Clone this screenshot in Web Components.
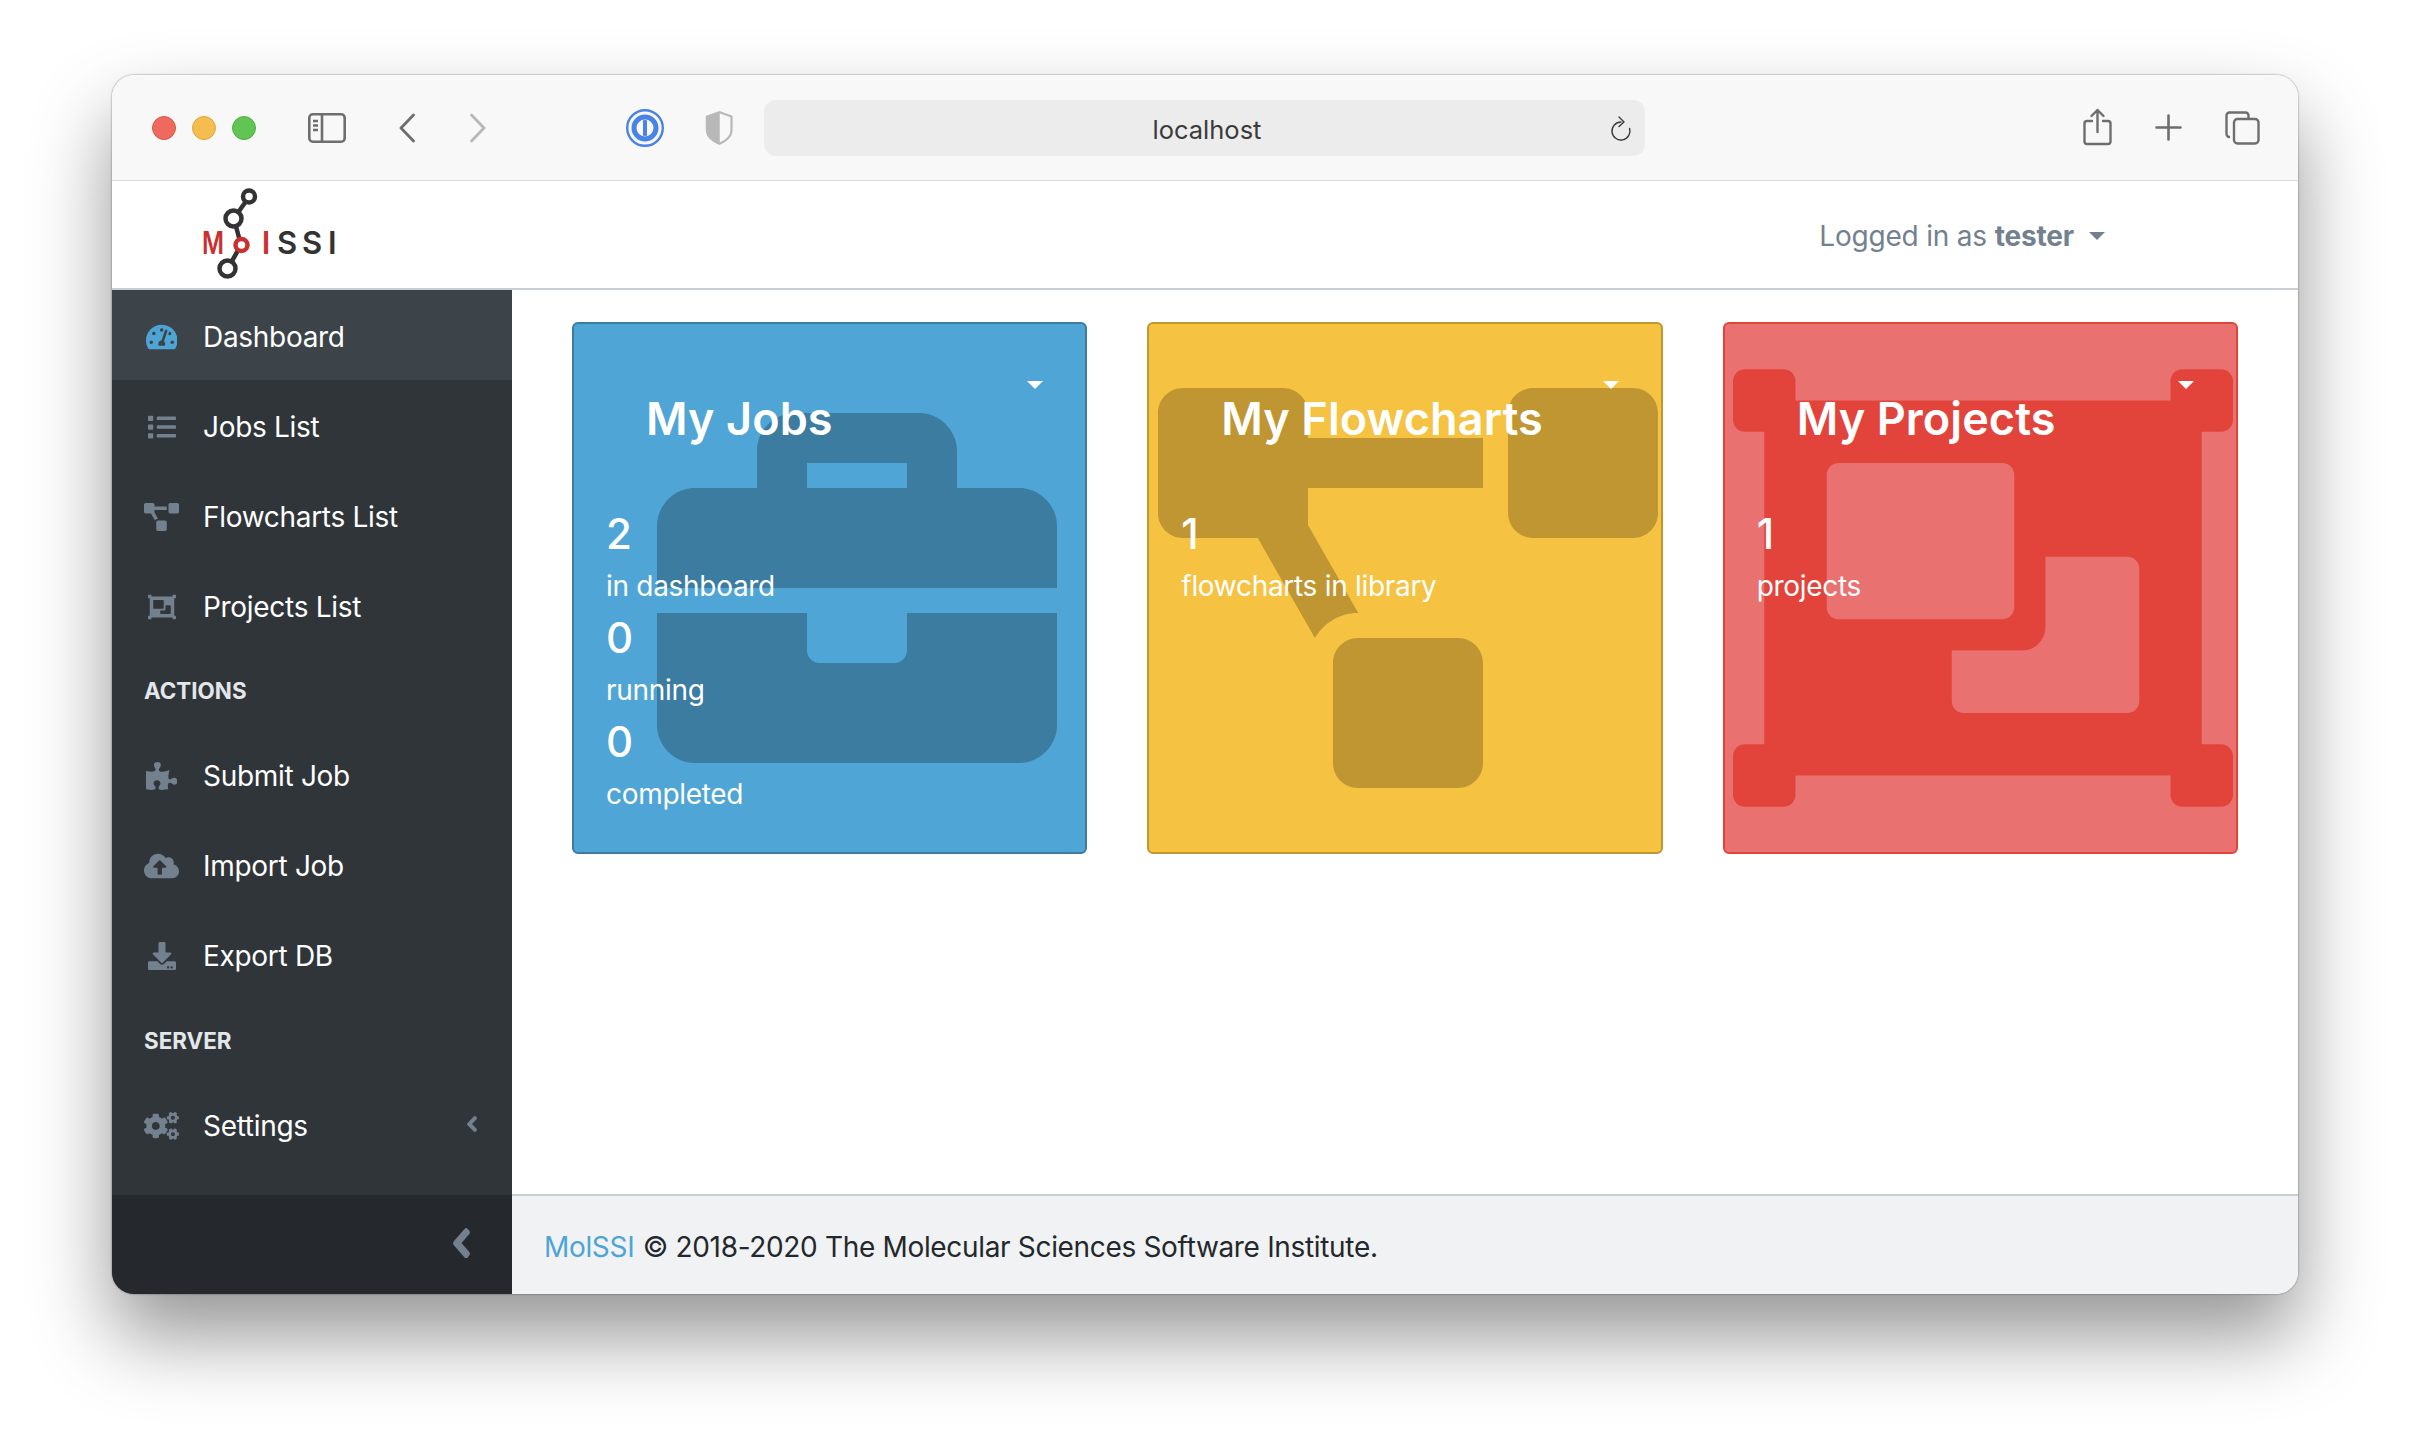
<!DOCTYPE html>
<html lang="en">
<head>
<meta charset="utf-8">
<title>MolSSI Dashboard</title>
<style>
    html, body { margin: 0; padding: 0; background: #fff; }
    body { font-family: Inter, "Liberation Sans", sans-serif; }
</style>
</head>
<body>
<app-window>
    <browser-toolbar slot="toolbar" url="localhost"></browser-toolbar>
    <app-navbar slot="navbar" user="tester"></app-navbar>
    <side-nav slot="sidebar">
        <nav-item icon="gauge" label="Dashboard" active></nav-item>
        <nav-item icon="list" label="Jobs List"></nav-item>
        <nav-item icon="diagram" label="Flowcharts List"></nav-item>
        <nav-item icon="group" label="Projects List"></nav-item>
        <nav-title>Actions</nav-title>
        <nav-item icon="puzzle" label="Submit Job"></nav-item>
        <nav-item icon="cloud" label="Import Job"></nav-item>
        <nav-item icon="download" label="Export DB"></nav-item>
        <nav-title>Server</nav-title>
        <nav-item icon="cogs" label="Settings" expandable></nav-item>
    </side-nav>
    <card-grid>
        <stat-card tone="blue" icon="briefcase" heading="My Jobs">
            <stat-line value="2" label="in dashboard"></stat-line>
            <stat-line value="0" label="running"></stat-line>
            <stat-line value="0" label="completed"></stat-line>
        </stat-card>
        <stat-card tone="yellow" icon="diagram" heading="My Flowcharts">
            <stat-line value="1" label="flowcharts in library"></stat-line>
        </stat-card>
        <stat-card tone="red" icon="group" heading="My Projects">
            <stat-line value="1" label="projects"></stat-line>
        </stat-card>
    </card-grid>
    <app-footer slot="footer"></app-footer>
</app-window>

<script>
const ICONS = {
    gauge: ['0 0 576 512', 'M288 32C128.94 32 0 160.94 0 320c0 52.8 14.25 102.26 39.06 144.8 5.61 9.62 16.3 15.2 27.44 15.2h443c11.14 0 21.83-5.58 27.44-15.2C561.75 422.26 576 372.8 576 320c0-159.06-128.94-288-288-288zm0 64c14.71 0 26.58 10.13 30.32 23.65-1.11 2.26-2.64 4.23-3.45 6.67l-9.22 27.67c-5.13 3.49-10.97 6.01-17.64 6.01-17.67 0-32-14.33-32-32S270.33 96 288 96zM96 384c-17.67 0-32-14.33-32-32s14.33-32 32-32 32 14.33 32 32-14.33 32-32 32zm48-160c-17.67 0-32-14.33-32-32s14.33-32 32-32 32 14.33 32 32-14.33 32-32 32zm246.77-72.41l-61.33 184C343.13 347.33 352 364.54 352 384c0 11.72-3.38 22.55-8.88 32H232.88c-5.5-9.45-8.88-20.28-8.88-32 0-33.94 26.5-61.43 59.9-63.59l61.34-184.01c4.17-12.56 17.73-19.45 30.36-15.17 12.57 4.19 19.35 17.77 15.17 30.36zm14.66 57.2l15.52-46.55c3.47-1.29 7.13-2.23 11.05-2.23 17.67 0 32 14.33 32 32s-14.33 32-32 32c-11.38-.01-20.89-6.27-26.57-15.22zM480 384c-17.67 0-32-14.33-32-32s14.33-32 32-32 32 14.33 32 32-14.33 32-32 32z'],
    list: ['0 0 512 512', 'M80 368H16a16 16 0 0 0-16 16v64a16 16 0 0 0 16 16h64a16 16 0 0 0 16-16v-64a16 16 0 0 0-16-16zm0-320H16A16 16 0 0 0 0 64v64a16 16 0 0 0 16 16h64a16 16 0 0 0 16-16V64a16 16 0 0 0-16-16zm0 160H16a16 16 0 0 0-16 16v64a16 16 0 0 0 16 16h64a16 16 0 0 0 16-16v-64a16 16 0 0 0-16-16zm416 176H176a16 16 0 0 0-16 16v32a16 16 0 0 0 16 16h320a16 16 0 0 0 16-16v-32a16 16 0 0 0-16-16zm0-320H176a16 16 0 0 0-16 16v32a16 16 0 0 0 16 16h320a16 16 0 0 0 16-16V80a16 16 0 0 0-16-16zm0 160H176a16 16 0 0 0-16 16v32a16 16 0 0 0 16 16h320a16 16 0 0 0 16-16v-32a16 16 0 0 0-16-16z'],
    diagram: ['0 0 640 512', 'M384 320H256c-17.67 0-32 14.33-32 32v128c0 17.67 14.33 32 32 32h128c17.67 0 32-14.33 32-32V352c0-17.67-14.33-32-32-32zM192 32c0-17.67-14.33-32-32-32H32C14.33 0 0 14.33 0 32v128c0 17.67 14.33 32 32 32h95.72l73.16 128.04C211.98 300.98 232.4 288 256 288h.28L192 175.51V128h224V64H192V32zM608 0H480c-17.67 0-32 14.33-32 32v128c0 17.67 14.33 32 32 32h128c17.67 0 32-14.33 32-32V32c0-17.67-14.33-32-32-32z'],
    group: ['0 0 512 512', 'M480 128V96h20c6.627 0 12-5.373 12-12V44c0-6.627-5.373-12-12-12h-40c-6.627 0-12 5.373-12 12v20H64V44c0-6.627-5.373-12-12-12H12C5.373 32 0 37.373 0 44v40c0 6.627 5.373 12 12 12h20v320H12c-6.627 0-12 5.373-12 12v40c0 6.627 5.373 12 12 12h40c6.627 0 12-5.373 12-12v-20h384v20c0 6.627 5.373 12 12 12h40c6.627 0 12-5.373 12-12v-40c0-6.627-5.373-12-12-12h-20V128zM96 276V140c0-6.627 5.373-12 12-12h168c6.627 0 12 5.373 12 12v136c0 6.627-5.373 12-12 12H108c-6.627 0-12-5.373-12-12zm320 96c0 6.627-5.373 12-12 12H236c-6.627 0-12-5.373-12-12v-52h72c13.255 0 24-10.745 24-24v-72h84c6.627 0 12 5.373 12 12v136z'],
    puzzle: ['0 0 576 512', 'M519.442 288.651c-41.519 0-59.5 31.593-82.058 31.593C377.409 320.244 432 144 432 144s-196.288 80-196.288-3.297c0-35.827 36.288-46.25 36.288-85.985C272 19.216 243.885 0 210.539 0c-34.654 0-66.366 18.891-66.366 56.346 0 41.364 31.711 59.277 31.711 81.75C175.885 207.719 0 166.758 0 166.758v333.237s178.635 41.047 178.635-28.662c0-22.473-40-40.107-40-81.471 0-37.456 29.25-56.346 63.577-56.346 33.673 0 61.788 19.216 61.788 54.717 0 39.735-36.288 50.158-36.288 85.985 0 60.803 129.675 25.73 181.23 25.73 0 0-34.725-120.101 25.827-120.101 35.962 0 46.423 36.152 86.308 36.152C556.712 416 576 387.99 576 354.443c0-34.199-18.962-65.792-56.558-65.792z'],
    cloud: ['0 0 640 512', 'M537.6 226.6c4.1-10.7 6.4-22.4 6.4-34.6 0-53-43-96-96-96-19.7 0-38.1 6-53.3 16.2C367 64.2 315.3 32 256 32c-88.4 0-160 71.6-160 160 0 2.7.1 5.4.2 8.1C40.2 219.8 0 273.2 0 336c0 79.5 64.5 144 144 144h368c70.7 0 128-57.3 128-128 0-61.9-44-113.6-102.4-125.4zM393.4 288H328v112c0 8.8-7.2 16-16 16h-48c-8.8 0-16-7.2-16-16V288h-65.4c-14.3 0-21.4-17.2-11.3-27.3l105.4-105.4c6.2-6.2 16.4-6.2 22.6 0l105.4 105.4c10.1 10.1 2.9 27.3-11.3 27.3z'],
    download: ['0 0 512 512', 'M216 0h80c13.3 0 24 10.7 24 24v168h87.7c17.8 0 26.7 21.5 14.1 34.1L269.7 378.3c-7.5 7.5-19.8 7.5-27.3 0L90.1 226.1c-12.6-12.6-3.7-34.1 14.1-34.1H192V24c0-13.3 10.7-24 24-24zm296 376v112c0 13.3-10.7 24-24 24H24c-13.3 0-24-10.7-24-24V376c0-13.3 10.7-24 24-24h146.7l49 49c20.1 20.1 52.5 20.1 72.6 0l49-49H488c13.3 0 24 10.7 24 24zm-124 88c0-11-9-20-20-20s-20 9-20 20 9 20 20 20 20-9 20-20zm64 0c0-11-9-20-20-20s-20 9-20 20 9 20 20 20 20-9 20-20z'],
    cogs: ['0 0 640 512', 'M512.1 191l-8.2 14.3c-3 5.3-9.4 7.5-15.1 5.4-11.8-4.4-22.6-10.7-32.1-18.6-4.6-3.8-5.8-10.5-2.8-15.7l8.2-14.3c-6.9-8-12.3-17.3-15.9-27.4h-16.5c-6 0-11.2-4.3-12.2-10.3-2-12-2.1-24.6 0-37.1 1-6 6.2-10.4 12.2-10.4h16.5c3.6-10.1 9-19.4 15.9-27.4l-8.2-14.3c-3-5.2-1.9-11.9 2.8-15.7 9.5-7.9 20.4-14.2 32.1-18.6 5.7-2.1 12.1.1 15.1 5.4l8.2 14.3c10.5-1.9 21.2-1.9 31.7 0L552 6.3c3-5.3 9.4-7.5 15.1-5.4 11.8 4.4 22.6 10.7 32.1 18.6 4.6 3.8 5.8 10.5 2.8 15.7l-8.2 14.3c6.9 8 12.3 17.3 15.9 27.4h16.5c6 0 11.2 4.3 12.2 10.3 2 12 2.1 24.6 0 37.1-1 6-6.2 10.4-12.2 10.4h-16.5c-3.6 10.1-9 19.4-15.9 27.4l8.2 14.3c3 5.2 1.9 11.9-2.8 15.7-9.5 7.9-20.4 14.2-32.1 18.6-5.7 2.1-12.1-.1-15.1-5.4l-8.2-14.3c-10.4 1.9-21.2 1.9-31.7 0zm-10.5-58.8c38.5 29.6 82.4-14.3 52.8-52.8-38.5-29.7-82.4 14.3-52.8 52.8zM386.3 286.1l33.7 16.8c10.1 5.8 14.5 18.1 10.5 29.1-8.9 24.2-26.4 46.4-42.6 65.8-7.4 8.9-20.2 11.1-30.3 5.3l-29.1-16.8c-16 13.7-34.6 24.6-54.9 31.7v33.6c0 11.6-8.3 21.6-19.7 23.6-24.6 4.2-50.4 4.4-75.9 0-11.5-2-20-11.9-20-23.6V418c-20.3-7.2-38.9-18-54.9-31.7L74 403c-10 5.8-22.9 3.6-30.3-5.3-16.2-19.4-33.3-41.6-42.2-65.7-4-10.9.4-23.2 10.5-29.1l33.3-16.8c-3.9-20.9-3.9-42.4 0-63.4L12 205.8c-10.1-5.8-14.6-18.1-10.5-29 8.9-24.2 26-46.4 42.2-65.8 7.4-8.9 20.2-11.1 30.3-5.3l29.1 16.8c16-13.7 34.6-24.6 54.9-31.7V57.1c0-11.5 8.2-21.5 19.6-23.5 24.6-4.2 50.5-4.4 76-.1 11.5 2 20 11.9 20 23.6v33.6c20.3 7.2 38.9 18 54.9 31.7l29.1-16.8c10-5.8 22.9-3.6 30.3 5.3 16.2 19.4 33.2 41.6 42.1 65.8 4 10.9.1 23.2-10 29.1l-33.7 16.8c3.9 21 3.9 42.5 0 63.5zm-117.6 21.1c59.2-77-28.7-164.9-105.7-105.7-59.2 77 28.7 164.9 105.7 105.7zm243.4 182.7l-8.2 14.3c-3 5.3-9.4 7.5-15.1 5.4-11.8-4.4-22.6-10.7-32.1-18.6-4.6-3.8-5.8-10.5-2.8-15.7l8.2-14.3c-6.9-8-12.3-17.3-15.9-27.4h-16.5c-6 0-11.2-4.3-12.2-10.3-2-12-2.1-24.6 0-37.1 1-6 6.2-10.4 12.2-10.4h16.5c3.6-10.1 9-19.4 15.9-27.4l-8.2-14.3c-3-5.2-1.9-11.9 2.8-15.7 9.5-7.9 20.4-14.2 32.1-18.6 5.7-2.1 12.1.1 15.1 5.4l8.2 14.3c10.5-1.9 21.2-1.9 31.7 0l8.2-14.3c3-5.3 9.4-7.5 15.1-5.4 11.8 4.4 22.6 10.7 32.1 18.6 4.6 3.8 5.8 10.5 2.8 15.7l-8.2 14.3c6.9 8 12.3 17.3 15.9 27.4h16.5c6 0 11.2 4.3 12.2 10.3 2 12 2.1 24.6 0 37.1-1 6-6.2 10.4-12.2 10.4h-16.5c-3.6 10.1-9 19.4-15.9 27.4l8.2 14.3c3 5.2 1.9 11.9-2.8 15.7-9.5 7.9-20.4 14.2-32.1 18.6-5.7 2.1-12.1-.1-15.1-5.4l-8.2-14.3c-10.4 1.9-21.2 1.9-31.7 0zM501.6 431c38.5 29.6 82.4-14.3 52.8-52.8-38.5-29.6-82.4 14.3-52.8 52.8z'],
    briefcase: ['0 0 512 512', 'M320 336c0 8.84-7.16 16-16 16h-96c-8.84 0-16-7.16-16-16v-48H0v144c0 25.6 22.4 48 48 48h416c25.6 0 48-22.4 48-48V288H320v48zm144-208h-80V80c0-25.6-22.4-48-48-48H176c-25.6 0-48 22.4-48 48v48H48c-25.6 0-48 22.4-48 48v80h512v-80c0-25.6-22.4-48-48-48zm-144 0H192V96h128v32z']
};
const ANGLE_LEFT = 'M31.7 239l136-136c9.4-9.4 24.6-9.4 33.9 0l22.6 22.6c9.4 9.4 9.4 24.6 0 33.9L127.9 256l96.4 96.4c9.4 9.4 9.4 24.6 0 33.9L201.7 412.5c-9.4 9.4-24.6 9.4-33.9 0l-136-136c-9.5-9.4-9.5-24.6-.1-34z';

function iconSvg(name, size) {
    const [box, d] = ICONS[name];
    const width = size * Number(box.split(' ')[2]) / 512;
    return `<svg width="${width}" height="${size}" viewBox="${box}" fill="currentColor"><path d="${d}"/></svg>`;
}

class ShadowBase extends HTMLElement {
    connectedCallback() {
        if (!this.shadowRoot) {
            this.attachShadow({ mode: 'open' });
        }
        this.shadowRoot.innerHTML = this.markup();
    }
}

class AppWindow extends ShadowBase {
    markup() {
        return `
            <style>
                :host { display: block; padding: 75px 112px 148px 112px; }
                .frame {
                    height: 1219px;
                    display: flex;
                    flex-direction: column;
                    border-radius: 22px;
                    overflow: hidden;
                    background: #fff;
                    box-shadow: 0 42px 80px rgba(0, 0, 0, .42), 0 0 2px rgba(0, 0, 0, .55);
                }
                .body { flex: 1; min-height: 0; display: flex; }
                .side { width: 400px; flex: none; display: flex; }
                .main { flex: 1; min-width: 0; display: flex; flex-direction: column; }
                .content { flex: 1; min-height: 0; }
            </style>
            <div class="frame">
                <slot name="toolbar"></slot>
                <slot name="navbar"></slot>
                <div class="body">
                    <div class="side"><slot name="sidebar"></slot></div>
                    <div class="main">
                        <div class="content"><slot></slot></div>
                        <slot name="footer"></slot>
                    </div>
                </div>
            </div>
        `;
    }
}

class BrowserToolbar extends ShadowBase {
    markup() {
        return `
            <style>
                :host {
                    display: flex;
                    align-items: center;
                    height: 105px;
                    padding-left: 40px;
                    background: #f8f8f8;
                    border-bottom: 1px solid #dcdcdc;
                    color: #6e6e6e;
                    flex: none;
                }
                .dot { width: 24px; height: 24px; border-radius: 50%; margin-right: 16px; box-sizing: border-box; }
                .red { background: #ee6a5f; border: 1px solid #d9564c; }
                .yellow { background: #f5bd4f; border: 1px solid #dea73c; }
                .green { background: #61c454; border: 1px solid #52ad46; }
                svg { display: block; flex: none; }
                .address {
                    width: 881px;
                    height: 56px;
                    margin-left: 31px;
                    border-radius: 12px;
                    background: #ececec;
                    position: relative;
                    display: flex;
                    align-items: center;
                    justify-content: center;
                    padding: 3px 0 0 5px;
                    box-sizing: border-box;
                    font: 400 25.5px Inter, "Liberation Sans", sans-serif;
                    color: #3b3b3b;
                }
                .reload { position: absolute; right: 13px; top: 16px; }
            </style>
            <span class="dot red"></span>
            <span class="dot yellow"></span>
            <span class="dot green"></span>
            <svg style="margin-left:36px" width="38" height="30" viewBox="0 0 38 30" fill="none" stroke="currentColor" stroke-width="2.6">
                <rect x="1.3" y="1.3" width="35.4" height="27.4" rx="3.5"/>
                <path d="M14 1.3v27.4M5 8h5M5 12.5h5M5 17h5"/>
            </svg>
            <svg style="margin-left:53px" width="16" height="30" viewBox="0 0 16 30" fill="none" stroke="currentColor" stroke-width="2.8" stroke-linecap="round" stroke-linejoin="round">
                <path d="M14.5 2 2 15l12.5 13"/>
            </svg>
            <svg style="margin-left:55px;color:#b8b8b8" width="16" height="30" viewBox="0 0 16 30" fill="none" stroke="currentColor" stroke-width="2.8" stroke-linecap="round" stroke-linejoin="round">
                <path d="M1.5 2 14 15 1.5 28"/>
            </svg>
            <svg style="margin-left:140px" width="38" height="38" viewBox="0 0 38 38">
                <circle cx="19" cy="19" r="17.8" fill="none" stroke="#4a83e6" stroke-width="2.4"/>
                <circle cx="19" cy="19" r="11" fill="none" stroke="#4a83e6" stroke-width="5"/>
                <rect x="17" y="11" width="4" height="16" rx="1" fill="#4a83e6"/>
            </svg>
            <svg style="margin-left:41px" width="28" height="34" viewBox="0 0 28 34">
                <path d="M14 1 1.5 5.5V19c0 6.5 6 11.5 12.5 14V1z" fill="#b8b8b8" stroke="#b8b8b8" stroke-width="1.5" stroke-linejoin="round"/>
                <path d="M14 1l12.5 4.5V19c0 6.5-6 11.5-12.5 14" fill="none" stroke="#b8b8b8" stroke-width="2.2" stroke-linejoin="round"/>
            </svg>
            <div class="address">
                ${this.getAttribute('url')}
                <svg class="reload" width="22" height="26" viewBox="0 0 22 26" fill="none" stroke="currentColor" stroke-width="1.4" stroke-linecap="round" stroke-linejoin="round">
                    <path d="M11 6a9 9 0 1 0 8.6 6.4"/>
                    <path d="M9 1l5 5-5 4.500"/>
                </svg>
            </div>
            <svg style="margin-left:438px;margin-top:-2px" width="29" height="38" viewBox="0 0 29 38" fill="none" stroke="currentColor" stroke-width="2.4" stroke-linecap="round" stroke-linejoin="round">
                <path d="M9 13H4a2.500 2.500 0 0 0-2.500 2.500v18A2.500 2.500 0 0 0 4 36h21a2.500 2.500 0 0 0 2.500-2.500v-18A2.500 2.500 0 0 0 25 13h-5"/>
                <path d="M14.500 24V2M8.500 8l6-6 6 6"/>
            </svg>
            <svg style="margin-left:43px" width="27" height="27" viewBox="0 0 27 27" stroke="currentColor" stroke-width="2.6" stroke-linecap="round">
                <path d="M13.500 1.500v24M1.500 13.500h24"/>
            </svg>
            <svg style="margin-left:43px" width="35" height="34" viewBox="0 0 35 34" fill="none" stroke="currentColor" stroke-width="2.4" stroke-linejoin="round">
                <path d="M5 26H4.500a3 3 0 0 1-3-3V4.500a3 3 0 0 1 3-3h16a3 3 0 0 1 3 3V8"/>
                <rect x="9" y="8" width="24.500" height="24.500" rx="3.500"/>
            </svg>
        `;
    }
}

class AppNavbar extends ShadowBase {
    markup() {
        return `
            <style>
                :host {
                    display: flex;
                    justify-content: space-between;
                    align-items: center;
                    height: 107px;
                    background: #fff;
                    border-bottom: 2px solid #c8ced3;
                    flex: none;
                }
                .logo { display: block; margin-left: 88px; }
                .logo text { font: 600 31px Inter, "Liberation Sans", sans-serif; }
                .user {
                    display: flex;
                    align-items: center;
                    margin-right: 193px;
                    margin-top: 2px;
                    font-size: 28px;
                    letter-spacing: -.2px;
                    color: #73818f;
                    font-family: Inter, "Liberation Sans", sans-serif;
                }
                b { font-weight: 700; margin-left: .28em; }
                .caret {
                    width: 0;
                    height: 0;
                    margin-left: 15px;
                    border-top: 8px solid #73818f;
                    border-left: 8px solid transparent;
                    border-right: 8px solid transparent;
                }
            </style>
            <svg class="logo" width="140" height="100" viewBox="200 184 140 100">
                <g fill="none" stroke="#333" stroke-width="4.500">
                    <path d="M249 196 233.500 218M234 218l7 26M241 244l-13.500 24"/>
                    <circle cx="249" cy="195.500" r="6" fill="#fff"/>
                    <circle cx="233.500" cy="217.500" r="8" fill="#fff"/>
                    <circle cx="227.500" cy="267.500" r="8" fill="#fff"/>
                </g>
                <circle cx="241.500" cy="244" r="6" fill="#fff" stroke="#c9302f" stroke-width="4.500"/>
                <text x="202" y="252.500" fill="#c9302f" textLength="22" lengthAdjust="spacingAndGlyphs">M</text>
                <text x="262" y="252.500" fill="#c9302f">l</text>
                <text x="277" y="252.500" fill="#333">S</text>
                <text x="302" y="252.500" fill="#333">S</text>
                <text x="328" y="252.500" fill="#333">I</text>
            </svg>
            <div class="user">Logged in as <b>${this.getAttribute('user')}</b><span class="caret"></span></div>
        `;
    }
}

class SideNav extends ShadowBase {
    markup() {
        return `
            <style>
                :host {
                    display: flex;
                    flex-direction: column;
                    width: 400px;
                    background: #303539;
                    color: #fff;
                    font-family: Inter, "Liberation Sans", sans-serif;
                }
                .items { flex: 1; min-height: 0; }
                .minimizer {
                    height: 99px;
                    flex: none;
                    background: #25282c;
                    color: #73818f;
                    display: flex;
                    align-items: center;
                    justify-content: flex-end;
                    padding-right: 42px;
                    box-sizing: border-box;
                }
                .minimizer svg { display: block; margin-top: -4px; }
            </style>
            <div class="items"><slot></slot></div>
            <div class="minimizer">
                <svg width="17" height="30" viewBox="24 96 208 320" preserveAspectRatio="none" fill="currentColor"><path d="${ANGLE_LEFT}"/></svg>
            </div>
        `;
    }
}

class NavItem extends ShadowBase {
    markup() {
        const active = this.hasAttribute('active');
        const chevron = this.hasAttribute('expandable')
            ? `<svg class="chevron" width="10" height="16" viewBox="24 96 208 320" preserveAspectRatio="none" fill="currentColor"><path d="${ANGLE_LEFT}"/></svg>`
            : '';
        return `
            <style>
                :host {
                    display: flex;
                    align-items: center;
                    height: 90px;
                    box-sizing: border-box;
                    padding: 3px 32px 0;
                    font-size: 28px;
                    letter-spacing: -.3px;
                    background: ${active ? '#3c4349' : 'transparent'};
                }
                .icon {
                    width: 35px;
                    margin-right: 24px;
                    flex: none;
                    display: flex;
                    justify-content: center;
                    color: ${active ? '#4ea5d5' : '#73818f'};
                }
                .icon svg { display: block; }
                .chevron { margin-left: auto; margin-right: 3px; margin-top: -4px; color: #73818f; }
            </style>
            <span class="icon">${iconSvg(this.getAttribute('icon'), 28)}</span>
            <span>${this.getAttribute('label')}</span>
            ${chevron}
        `;
    }
}

class NavTitle extends ShadowBase {
    markup() {
        return `
            <style>
                :host {
                    display: block;
                    padding: 24px 32px 22px;
                    font-size: 22.4px;
                    line-height: 33.6px;
                    font-weight: 700;
                    color: #e4e7ea;
                    text-transform: uppercase;
                }
            </style>
            <slot></slot>
        `;
    }
}

class CardGrid extends ShadowBase {
    markup() {
        return `
            <style>
                :host {
                    display: grid;
                    grid-template-columns: repeat(3, 1fr);
                    align-items: stretch;
                    column-gap: 60px;
                    padding: 32px 60px 0;
                }
            </style>
            <slot></slot>
        `;
    }
}

class StatCard extends ShadowBase {
    markup() {
        const tones = {
            blue: ['#4fa5d5', '#3b7ca0'],
            yellow: ['#f5c242', '#bf9632'],
            red: ['#e97270', '#e2443b']
        };
        const [bg, dark] = tones[this.getAttribute('tone')];
        const name = this.getAttribute('icon');
        const place = {
            briefcase: 'left:83px;top:64px',
            diagram: 'left:9px;top:64px',
            group: 'left:8px;top:14px'
        }[name];
        const size = name === 'group' ? 500 : 400;
        return `
            <style>
                :host {
                    display: block;
                    position: relative;
                    height: 532px;
                    box-sizing: border-box;
                    border: 2px solid ${dark};
                    border-radius: 6px;
                    background: ${bg};
                    color: #fff;
                    overflow: hidden;
                    font-family: Inter, "Liberation Sans", sans-serif;
                }
                .art { position: absolute; ${place}; color: ${dark}; }
                .art svg { display: block; }
                .caret {
                    position: absolute;
                    right: 42px;
                    top: 57px;
                    width: 0;
                    height: 0;
                    border-top: 8px solid #fff;
                    border-left: 8px solid transparent;
                    border-right: 8px solid transparent;
                }
                .body { position: relative; padding: 68px 32px 0; }
                h2 {
                    margin: 0 0 64px 40px;
                    font-size: 45px;
                    line-height: 54px;
                    font-weight: 600;
                    letter-spacing: .1px;
                }
            </style>
            <div class="art">${iconSvg(name, size)}</div>
            <div class="body">
                <h2>${this.getAttribute('heading')}</h2>
                <slot></slot>
            </div>
            <span class="caret"></span>
        `;
    }
}

class StatLine extends ShadowBase {
    markup() {
        return `
            <style>
                :host { display: block; margin-bottom: 7px; }
                .value { font-size: 42px; line-height: 48px; font-weight: 500; margin-bottom: 7px; }
                .label { font-size: 28px; line-height: 42px; letter-spacing: -.3px; }
            </style>
            <div class="value">${this.getAttribute('value')}</div>
            <div class="label">${this.getAttribute('label')}</div>
        `;
    }
}

class AppFooter extends ShadowBase {
    markup() {
        return `
            <style>
                :host {
                    display: flex;
                    align-items: center;
                    height: 100px;
                    box-sizing: border-box;
                    flex: none;
                    padding: 3px 32px 0;
                    background: #f1f2f4;
                    border-top: 2px solid #c8ced3;
                    color: #23282c;
                    font-size: 28px;
                    letter-spacing: -.33px;
                    font-family: Inter, "Liberation Sans", sans-serif;
                }
                a { color: #4ea5d5; text-decoration: none; margin-right: .3em; }
            </style>
            <a href="#">MolSSI</a> <span>© 2018-2020 The Molecular Sciences Software Institute.</span>
        `;
    }
}

customElements.define('app-window', AppWindow);
customElements.define('browser-toolbar', BrowserToolbar);
customElements.define('app-navbar', AppNavbar);
customElements.define('side-nav', SideNav);
customElements.define('nav-item', NavItem);
customElements.define('nav-title', NavTitle);
customElements.define('card-grid', CardGrid);
customElements.define('stat-card', StatCard);
customElements.define('stat-line', StatLine);
customElements.define('app-footer', AppFooter);
</script>
</body>
</html>
